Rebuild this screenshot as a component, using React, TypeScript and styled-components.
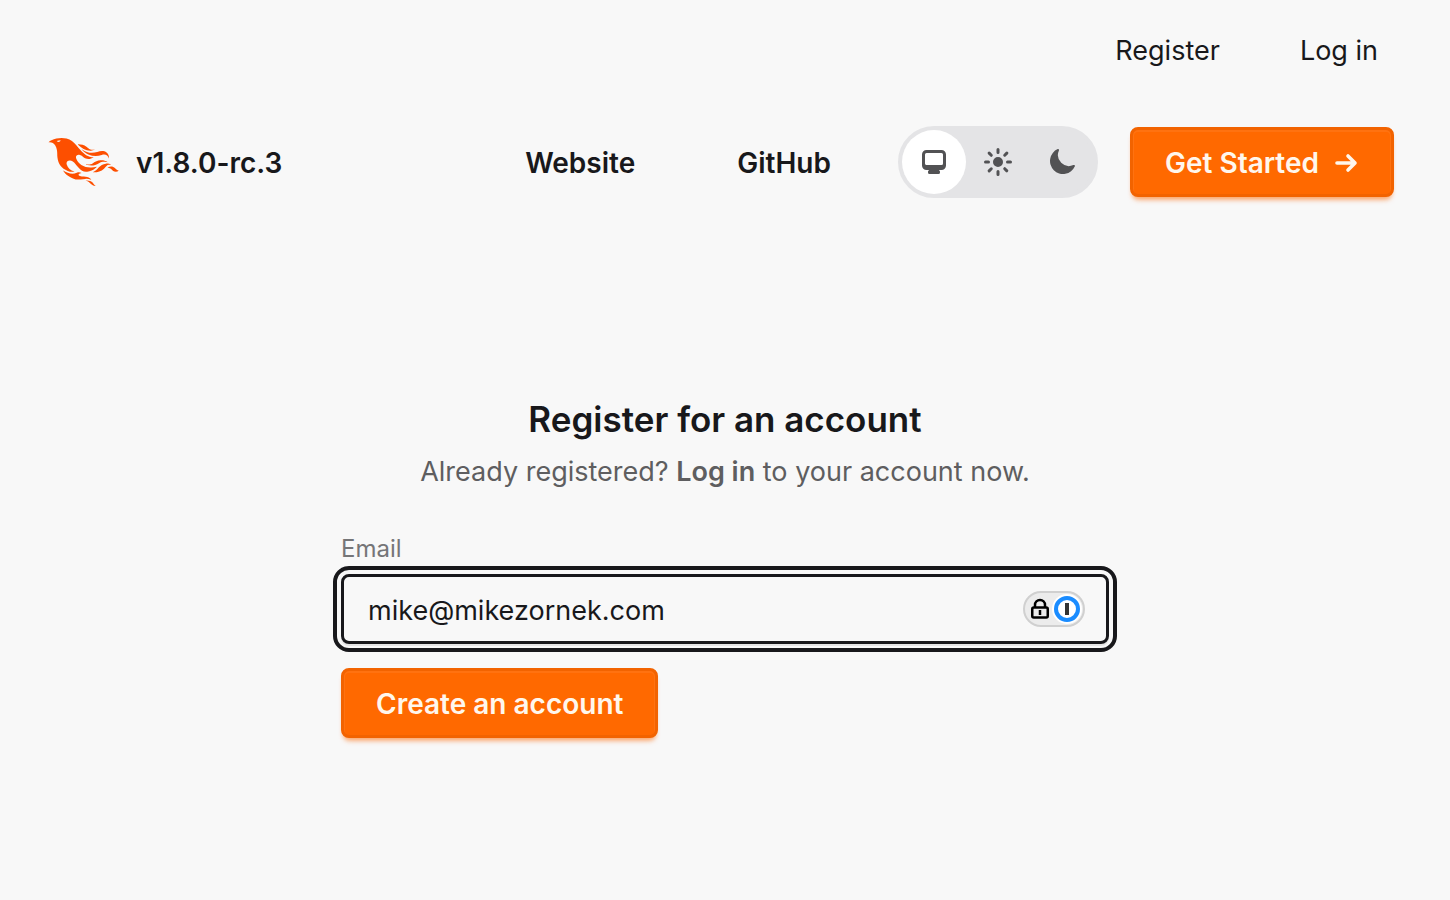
import React, { useState } from "react";
import styled, { createGlobalStyle, css } from "styled-components";

const GlobalStyle = createGlobalStyle`
  *, *::before, *::after { box-sizing: border-box; }
  body {
    margin: 0;
    background: #f8f8f8;
    color: #18181b;
    font-family: Inter, "Liberation Sans", sans-serif;
    font-size: 27px;
    line-height: 40px;
  }
  a { color: inherit; text-decoration: none; }
`;

const AccountNav = styled.nav`
  display: flex;
  justify-content: flex-end;
  gap: 80px;
  padding: 31px 72px 0 32px;
`;

const Header = styled.header`
  display: flex;
  align-items: center;
  justify-content: space-between;
  padding: 55px 56px 0 48px;
`;

const Brand = styled.a`
  display: flex;
  align-items: center;
  gap: 16px;
  font-size: 28px;
  font-weight: 600;
`;

const Version = styled.span`
  padding-top: 2px;
`;

const Actions = styled.div`
  display: flex;
  align-items: center;
  gap: 32px;
`;

const GhostLink = styled.a`
  padding: 16px 35px 14px;
  font-size: 28px;
  font-weight: 600;
`;

const ThemeSwitch = styled.div`
  display: flex;
  border: 4px solid #e4e4e6;
  border-radius: 36px;
  background: #e4e4e6;
`;

const ThemeButton = styled.button<{ $active: boolean }>`
  display: flex;
  align-items: center;
  justify-content: center;
  width: 64px;
  height: 64px;
  padding: 0;
  border: 0;
  border-radius: 50%;
  background: ${(p) => (p.$active ? "#ffffff" : "transparent")};
  color: #525254;
  cursor: pointer;
`;

const primary = css`
  display: inline-flex;
  align-items: center;
  justify-content: center;
  gap: 8px;
  height: 70px;
  padding: 2px 32px 0;
  border: 3px solid #f26300;
  border-radius: 8px;
  background: #ff6900;
  color: #fff7ed;
  font: inherit;
  font-size: 28px;
  font-weight: 600;
  white-space: nowrap;
  cursor: pointer;
  box-shadow: inset 0 1px 0 1px #ff7210, 0 6px 6px -4px #ff690066, 0 4px 4px -2px #ff690066;
`;

const PrimaryLink = styled.a`${primary}`;
const PrimaryButton = styled.button`${primary}`;

const Main = styled.main`
  max-width: 832px;
  margin: 0 auto;
  padding: 194px 32px 64px;
`;

const Intro = styled.div`
  text-align: center;
`;

const Title = styled.h1`
  margin: 0;
  font-size: 35px;
  line-height: 54px;
  font-weight: 600;
`;

const Subtitle = styled.p`
  margin: 6px 0 0;
  color: #5e5e60;
`;

const StrongLink = styled.a`
  font-weight: 600;
`;

const Form = styled.form`
  margin-top: 40px;
`;

const Label = styled.label`
  display: block;
  margin-bottom: 8px;
  color: #757577;
  font-size: 24px;
  line-height: 34px;
`;

const Field = styled.div`
  display: flex;
  align-items: center;
  height: 70px;
  margin-bottom: 24px;
  padding: 0 21px 0 24px;
  border: 3px solid #18181b;
  border-radius: 8px;
  outline: 4px solid #18181b;
  outline-offset: 4px;
  box-shadow: 0 2px 0 #e4e4e4;
`;

const EmailInput = styled.input`
  flex: 1;
  min-width: 0;
  padding: 3px 0 0;
  border: 0;
  outline: 0;
  background: transparent;
  color: inherit;
  font: inherit;
`;

const VaultButton = styled.button`
  display: flex;
  align-items: center;
  justify-content: space-between;
  width: 62px;
  height: 36px;
  padding: 0 1px 0 5px;
  border: 2px solid #d0d0d0;
  border-radius: 18px;
  background: #ececec;
  cursor: pointer;
`;

const themes = [
  {
    id: "system",
    path: "M2 4.25A2.25 2.25 0 0 1 4.25 2h7.5A2.25 2.25 0 0 1 14 4.25v5.5A2.25 2.25 0 0 1 11.75 12h-1.312c.1.128.21.248.328.36a.75.75 0 0 1 .234.545v.345a.75.75 0 0 1-.75.75h-4.5a.75.75 0 0 1-.75-.75v-.345a.75.75 0 0 1 .234-.545c.118-.111.228-.232.328-.36H4.25A2.25 2.25 0 0 1 2 9.75v-5.5Zm2.25-.75a.75.75 0 0 0-.75.75v4.5c0 .414.336.75.75.75h7.5a.75.75 0 0 0 .75-.75v-4.5a.75.75 0 0 0-.75-.75h-7.5Z",
  },
  {
    id: "light",
    path: "M8 1a.75.75 0 0 1 .75.75v1.5a.75.75 0 0 1-1.5 0v-1.5A.75.75 0 0 1 8 1ZM10.5 8a2.5 2.5 0 1 1-5 0 2.5 2.5 0 0 1 5 0ZM12.95 4.11a.75.75 0 1 0-1.06-1.06l-1.062 1.06a.75.75 0 0 0 1.061 1.062l1.06-1.061ZM15 8a.75.75 0 0 1-.75.75h-1.5a.75.75 0 0 1 0-1.5h1.5A.75.75 0 0 1 15 8ZM11.89 12.95a.75.75 0 0 0 1.06-1.06l-1.06-1.062a.75.75 0 0 0-1.062 1.061l1.061 1.06ZM8 12a.75.75 0 0 1 .75.75v1.5a.75.75 0 0 1-1.5 0v-1.5A.75.75 0 0 1 8 12ZM5.172 11.89a.75.75 0 0 0-1.061-1.062L3.05 11.89a.75.75 0 1 0 1.06 1.06l1.06-1.06ZM4 8a.75.75 0 0 1-.75.75h-1.5a.75.75 0 0 1 0-1.5h1.5A.75.75 0 0 1 4 8ZM4.11 5.172A.75.75 0 0 0 5.173 4.11L4.11 3.05a.75.75 0 1 0-1.06 1.06l1.06 1.06Z",
  },
  {
    id: "dark",
    path: "M14.438 10.148c.19-.425-.321-.787-.748-.601A5.5 5.5 0 0 1 6.453 2.31c.186-.427-.176-.938-.6-.748a6.501 6.501 0 1 0 8.585 8.586Z",
  },
];

const PhoenixLogo = () => (
  <svg viewBox="0 0 71 48" width="72" height="48" fill="#fd4f00" aria-hidden="true">
    <path d="m26.371 33.477-.552-.1c-3.92-.729-6.397-3.1-7.57-6.829-.733-2.324.597-4.035 3.035-4.148 1.995-.092 3.362 1.055 4.57 2.39 1.557 1.72 2.984 3.558 4.514 5.305 2.202 2.515 4.797 4.134 8.347 3.634 3.183-.448 5.958-1.725 8.371-3.828.363-.316.761-.592 1.144-.886l-.241-.284c-2.027.63-4.093.841-6.205.735-3.195-.16-6.24-.828-8.964-2.582-2.486-1.601-4.319-3.746-5.19-6.611-.704-2.315.736-3.934 3.135-3.6.948.133 1.746.56 2.463 1.165.583.493 1.143 1.015 1.738 1.493 2.8 2.25 6.712 2.375 10.265-.068-5.842-.026-9.817-3.24-13.308-7.313-1.366-1.594-2.7-3.216-4.095-4.785-2.698-3.036-5.692-5.71-9.79-6.623C12.8-.623 7.745.14 2.893 2.361 1.926 2.804.997 3.319 0 4.149c.494 0 .763.006 1.032 0 2.446-.064 4.28 1.023 5.602 3.024.962 1.457 1.415 3.104 1.761 4.798.513 2.515.247 5.078.544 7.605.761 6.494 4.08 11.026 10.26 13.346 2.267.852 4.591 1.135 7.172.555ZM10.751 3.852c-.976.246-1.756-.148-2.56-.962 1.377-.343 2.592-.476 3.897-.528-.107.848-.607 1.306-1.336 1.49Zm32.002 37.924c-.085-.626-.62-.901-1.04-1.228-1.857-1.446-4.03-1.958-6.333-2-1.375-.026-2.735-.128-4.031-.61-.595-.22-1.26-.505-1.244-1.272.015-.78.693-1 1.31-1.184.505-.15 1.026-.247 1.6-.382-1.46-.936-2.886-1.065-4.787-.3-2.993 1.202-5.943 1.06-8.926-.017-1.684-.608-3.179-1.563-4.735-2.408l-.197-.054.122.107c1.29 2.115 3.034 3.817 5.004 5.271 3.793 2.8 7.936 4.471 12.784 3.73A66.714 66.714 0 0 1 37 40.877c1.98-.16 3.866.398 5.753.899Zm-9.14-30.345c-.105-.076-.206-.266-.42-.069 1.745 2.36 3.985 4.098 6.683 5.193 4.354 1.767 8.773 2.07 13.293.51 3.51-1.21 6.033-.028 7.343 3.38.19-3.955-2.137-6.837-5.843-7.401-2.084-.318-4.01.373-5.962.94-5.434 1.575-10.485.798-15.094-2.553Zm27.085 15.425c.708.059 1.416.123 2.124.185-1.6-1.405-3.55-1.517-5.523-1.404-3.003.17-5.167 1.903-7.14 3.972-1.739 1.824-3.31 3.87-5.903 4.604.043.078.054.117.066.117.35.005.699.021 1.047.005 3.768-.17 7.317-.965 10.14-3.7.89-.86 1.685-1.817 2.544-2.71.716-.746 1.584-1.159 2.645-1.07Zm-8.753-4.67c-2.812.246-5.254 1.409-7.548 2.943-1.766 1.18-3.654 1.738-5.776 1.37-.374-.066-.75-.114-1.124-.17l-.013.156c.135.07.265.151.405.207.354.14.702.308 1.07.395 4.083.971 7.992.474 11.516-1.803 2.221-1.435 4.521-1.707 7.013-1.336.252.038.503.083.756.107.234.022.479.255.795.003-2.179-1.574-4.526-2.096-7.094-1.872Zm-10.049-9.544c1.475.051 2.943-.142 4.486-1.059-.452.04-.643.04-.827.076-2.126.424-4.033-.04-5.733-1.383-.623-.493-1.257-.974-1.889-1.457-2.503-1.914-5.374-2.555-8.514-2.5.05.154.054.26.108.315 3.417 3.455 7.371 5.836 12.369 6.008Zm24.727 17.731c-2.114-2.097-4.952-2.367-7.578-.537 1.738.078 3.043.632 4.101 1.728.374.388.763.768 1.182 1.106 1.6 1.29 4.311 1.352 5.896.155-1.861-.726-1.861-.726-3.601-2.452Zm-21.058 16.06c-1.858-3.46-4.981-4.24-8.59-4.008a9.667 9.667 0 0 1 2.977 1.39c.84.586 1.547 1.311 2.243 2.055 1.38 1.473 3.534 2.376 4.962 2.07-.656-.412-1.238-.848-1.592-1.507Z" />
  </svg>
);

const ArrowIcon = () => (
  <svg width="32" height="32" viewBox="0 0 32 32" fill="none" stroke="currentColor" strokeWidth="3.6" strokeLinecap="round" strokeLinejoin="round" aria-hidden="true">
    <path d="M10 16h18M21 9l7 7-7 7" />
  </svg>
);

const LockIcon = () => (
  <svg width="20" height="22" viewBox="0 0 20 22" fill="none" stroke="#000" strokeWidth="2.5" aria-hidden="true">
    <rect x="2.25" y="9.5" width="15.5" height="10" rx="1.5" />
    <path d="M5 9.5V7a5 5 0 0 1 10 0v2.5M10 12v5" />
  </svg>
);

const VaultIcon = () => (
  <svg width="30" height="30" viewBox="0 0 30 30" aria-hidden="true">
    <circle cx="15" cy="15" r="15" fill="#fff" />
    <circle cx="15" cy="15" r="11" fill="#fff" stroke="#1a8cff" strokeWidth="4" />
    <rect x="13" y="9" width="4" height="12" fill="#333" />
  </svg>
);

export default function App() {
  const [theme, setTheme] = useState("system");
  const [email, setEmail] = useState("mike@mikezornek.com");

  return (
    <>
      <GlobalStyle />
      <AccountNav>
        <a href="#register">Register</a>
        <a href="#login">Log in</a>
      </AccountNav>
      <Header>
        <Brand href="#home">
          <PhoenixLogo />
          <Version>v1.8.0-rc.3</Version>
        </Brand>
        <Actions>
          <GhostLink href="#website">Website</GhostLink>
          <GhostLink href="#github">GitHub</GhostLink>
          <ThemeSwitch role="group" aria-label="Theme">
            {themes.map((t) => (
              <ThemeButton
                key={t.id}
                type="button"
                aria-label={t.id}
                aria-pressed={theme === t.id}
                $active={theme === t.id}
                onClick={() => setTheme(t.id)}
              >
                <svg width="32" height="32" viewBox="0 0 16 16" fill="currentColor" fillRule="evenodd" aria-hidden="true">
                  <path d={t.path} />
                </svg>
              </ThemeButton>
            ))}
          </ThemeSwitch>
          <PrimaryLink href="#start">
            Get Started
            <ArrowIcon />
          </PrimaryLink>
        </Actions>
      </Header>
      <Main>
        <Intro>
          <Title>Register for an account</Title>
          <Subtitle>
            Already registered? <StrongLink href="#login">Log in</StrongLink> to your account now.
          </Subtitle>
        </Intro>
        <Form onSubmit={(e) => e.preventDefault()}>
          <Label htmlFor="email">Email</Label>
          <Field>
            <EmailInput
              id="email"
              type="email"
              value={email}
              onChange={(e) => setEmail(e.target.value)}
            />
            <VaultButton type="button" aria-label="Fill from vault">
              <LockIcon />
              <VaultIcon />
            </VaultButton>
          </Field>
          <PrimaryButton type="submit">Create an account</PrimaryButton>
        </Form>
      </Main>
    </>
  );
}
